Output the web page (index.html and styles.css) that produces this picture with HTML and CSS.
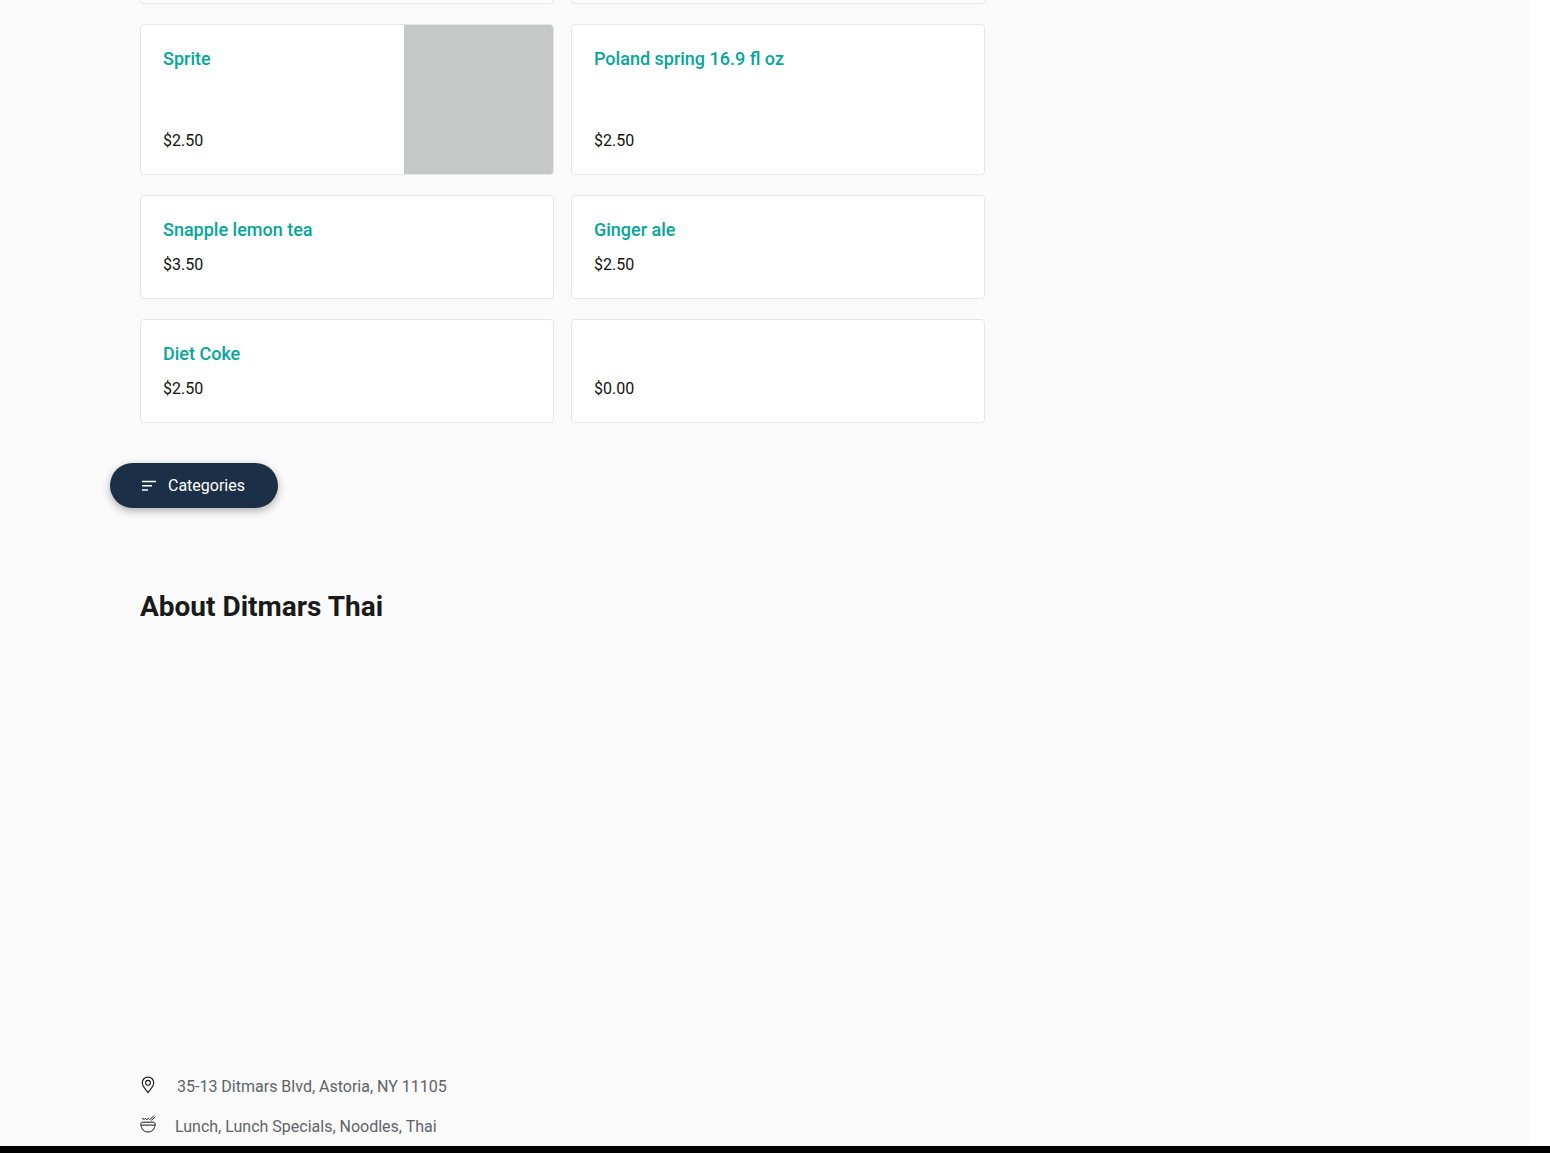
FILE: index.html
```html
<!DOCTYPE html>
<html lang="en">
<head>
<meta charset="utf-8">
<title>Ditmars Thai</title>
<link rel="stylesheet" href="styles.css">
</head>
<body>
<div class="page">
  <main class="main">
    <div class="grid">
      <div class="stub"></div>
      <div class="stub"></div>
      <article class="card card-tall">
        <div class="card-body">
          <h3 class="name">Sprite</h3>
          <p class="price">$2.50</p>
        </div>
        <div class="thumb"></div>
      </article>
      <article class="card card-tall">
        <div class="card-body">
          <h3 class="name">Poland spring 16.9 fl oz</h3>
          <p class="price">$2.50</p>
        </div>
      </article>
      <article class="card">
        <div class="card-body">
          <h3 class="name">Snapple lemon tea</h3>
          <p class="price">$3.50</p>
        </div>
      </article>
      <article class="card">
        <div class="card-body">
          <h3 class="name">Ginger ale</h3>
          <p class="price">$2.50</p>
        </div>
      </article>
      <article class="card">
        <div class="card-body">
          <h3 class="name">Diet Coke</h3>
          <p class="price">$2.50</p>
        </div>
      </article>
      <article class="card">
        <div class="card-body">
          <h3 class="name"></h3>
          <p class="price">$0.00</p>
        </div>
      </article>
    </div>
    <button class="pill" type="button">
      <svg class="pill-icon" width="16" height="12" viewBox="0 0 16 12" aria-hidden="true"><path d="M1 1.500h14M1 5.800h10M1 10h6" fill="none" stroke="#fff" stroke-width="1.600"/></svg>
      <span>Categories</span>
    </button>
    <h2 class="about">About Ditmars Thai</h2>
    <div class="map-space"></div>
    <div class="info info-address">
      <svg class="icon-pin" width="16" height="18" viewBox="0 0 16 18" aria-hidden="true"><path d="M8 1.100C4.600 1.100 2.300 3.600 2.300 6.800c0 3.600 3.300 6.600 5.700 9.900 2.400-3.300 5.700-6.300 5.700-9.900C13.700 3.600 11.400 1.100 8 1.100z" fill="none" stroke="#1a1a1a" stroke-width="1.100"/><circle cx="8" cy="6.800" r="2.400" fill="none" stroke="#1a1a1a" stroke-width="1.100"/></svg>
      <span>35-13 Ditmars Blvd, Astoria, NY 11105</span>
    </div>
    <div class="info info-cuisine">
      <svg class="icon-bowl" width="16" height="18" viewBox="0 0 16 18" aria-hidden="true"><path d="M.7 9.500c0-1.600 1-2.300 2.200-2.300h10.200c1.200 0 2.200.7 2.200 2.300v.6H.7zM1.200 10.100c0 3.900 2.700 6.900 6.800 6.900s6.800-3 6.800-6.900" fill="none" stroke="#1a1a1a" stroke-width="1"/><path d="M2 3.300l2.200 1.200 1.300-1.300 1.400 1.500 1.400-1.400 1.200 1.300M10 4.600l3.700-3.900M11.200 5.400l3.900-3.300" fill="none" stroke="#1a1a1a" stroke-width="1"/></svg>
      <span>Lunch, Lunch Specials, Noodles, Thai</span>
    </div>
  </main>
  <div class="bottom-bar"></div>
</div>
</body>
</html>
```
FILE: styles.css
```css
* { box-sizing: border-box; }
html, body { margin: 0; padding: 0; background: #fff; }
body { font-family: Roboto, "Liberation Sans", sans-serif; }
.page {
  height: 1153px;
  overflow: hidden;
  display: flex;
  flex-direction: column;
}
.main {
  width: 1529px;
  height: 1146px;
  flex: none;
  background: #fafafa;
  padding-left: 140px;
  overflow: hidden;
}
.bottom-bar { height: 7px; flex: none; background: #000; }
.grid {
  display: grid;
  grid-template-columns: 414px 414px;
  column-gap: 17px;
  row-gap: 20px;
}
.stub {
  height: 4px;
  background: #fff;
  border: 1px solid #e6e6e6;
  border-top: 0;
  border-radius: 0 0 4px 4px;
}
.card {
  display: flex;
  height: 104px;
  background: #fff;
  border: 1px solid #e6e6e6;
  border-radius: 4px;
  overflow: hidden;
}
.card-tall { height: 151px; }
.card-body {
  flex: 1;
  min-width: 0;
  padding: 22px 22px 23px 22px;
  display: flex;
  flex-direction: column;
  justify-content: space-between;
}
.name {
  margin: 0;
  min-height: 24px;
  font-size: 18px;
  line-height: 24px;
  font-weight: 500;
  color: #05a699;
}
.price {
  margin: 0;
  font-size: 16px;
  line-height: 20px;
  color: #111;
}
.thumb {
  width: 149px;
  flex: none;
  background: #c6c7c7;
}
.pill {
  display: flex;
  align-items: center;
  width: 168px;
  height: 45px;
  margin: 40px 0 0 -30px;
  padding: 0 0 0 31px;
  border: 0;
  border-radius: 23px;
  background: #1b3046;
  color: #fff;
  font: 400 16px/20px Roboto, "Liberation Sans", sans-serif;
  box-shadow: 0 3px 8px rgba(0, 0, 0, .3);
}
.pill-icon { margin-right: 11px; }
.about {
  margin: 0;
  padding-top: 81px;
  font-size: 28px;
  line-height: 36px;
  font-weight: 700;
  color: #1a1a1a;
}
.map-space { height: 449px; }
.info {
  display: flex;
  align-items: center;
  height: 24px;
  font-size: 16px;
  color: #5f6368;
}
.info svg { flex: none; }
.icon-pin { margin-bottom: 2px; }
.icon-bowl { margin-bottom: 5px; }
.info-address span { margin-left: 21px; }
.info-cuisine { margin-top: 16px; }
.info-cuisine span { margin-left: 19px; }
```
